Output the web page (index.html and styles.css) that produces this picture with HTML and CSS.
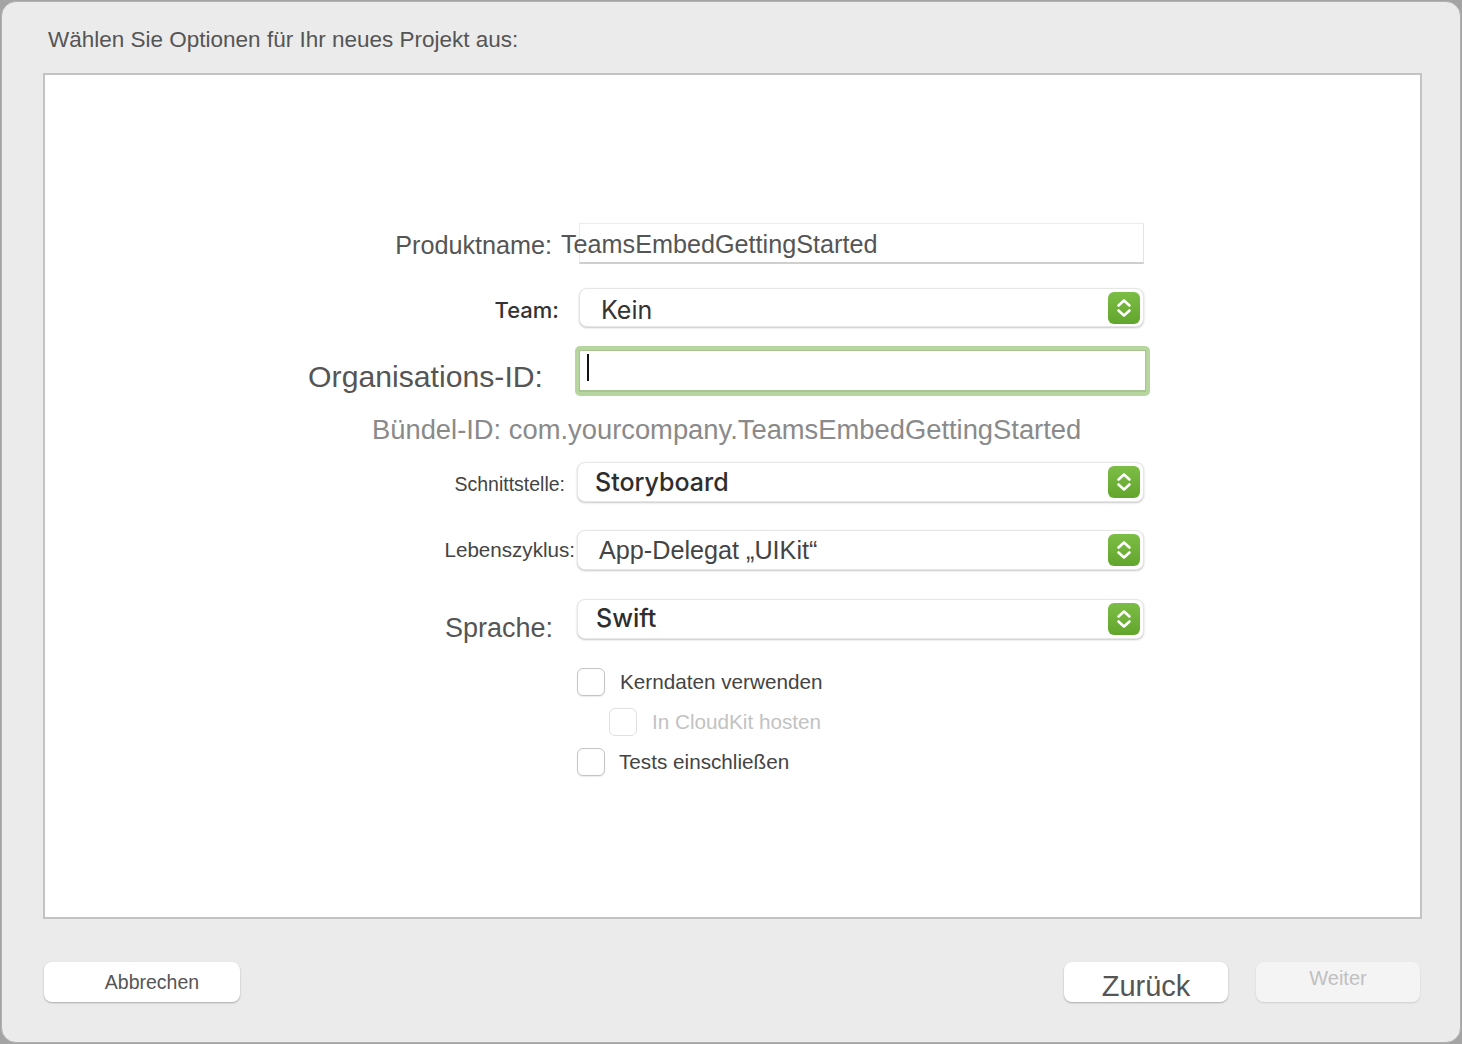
FILE: index.html
```html
<!DOCTYPE html>
<html lang="de">
<head>
<meta charset="utf-8">
<title>Optionen</title>
<link rel="stylesheet" href="styles.css">
</head>
<body>
<div class="window">
  <div class="title">Wählen Sie Optionen für Ihr neues Projekt aus:</div>
  <div class="panel">
    <div class="form">
      <div class="row row-product">
        <div class="label lbl-product">Produktname:</div>
        <div class="textfield"><span class="tf-value">TeamsEmbedGettingStarted</span></div>
      </div>
      <div class="row row-team">
        <div class="label lbl-team">Team:</div>
        <div class="popup"><span class="pv pv-team">Kein</span><span class="stepper"><svg viewBox="0 0 32 32" width="32" height="32"><path d="M10.5 13.5 L16 8.5 L21.5 13.5" fill="none" stroke="#fff" stroke-width="2.6" stroke-linecap="round" stroke-linejoin="round"/><path d="M10.5 18.5 L16 23.5 L21.5 18.5" fill="none" stroke="#fff" stroke-width="2.6" stroke-linecap="round" stroke-linejoin="round"/></svg></span></div>
      </div>
      <div class="row row-org">
        <div class="label lbl-org">Organisations-ID:</div>
        <div class="orgfield"><div class="org-inner"><span class="caret"></span></div></div>
      </div>
      <div class="bundle">Bündel-ID: com.yourcompany.TeamsEmbedGettingStarted</div>
      <div class="row row-ui">
        <div class="label lbl-ui">Schnittstelle:</div>
        <div class="popup popup-wide"><span class="pv pv-ui">Storyboard</span><span class="stepper"><svg viewBox="0 0 32 32" width="32" height="32"><path d="M10.5 13.5 L16 8.5 L21.5 13.5" fill="none" stroke="#fff" stroke-width="2.6" stroke-linecap="round" stroke-linejoin="round"/><path d="M10.5 18.5 L16 23.5 L21.5 18.5" fill="none" stroke="#fff" stroke-width="2.6" stroke-linecap="round" stroke-linejoin="round"/></svg></span></div>
      </div>
      <div class="row row-life">
        <div class="label lbl-life">Lebenszyklus:</div>
        <div class="popup popup-wide"><span class="pv pv-life">App-Delegat „UIKit“</span><span class="stepper"><svg viewBox="0 0 32 32" width="32" height="32"><path d="M10.5 13.5 L16 8.5 L21.5 13.5" fill="none" stroke="#fff" stroke-width="2.6" stroke-linecap="round" stroke-linejoin="round"/><path d="M10.5 18.5 L16 23.5 L21.5 18.5" fill="none" stroke="#fff" stroke-width="2.6" stroke-linecap="round" stroke-linejoin="round"/></svg></span></div>
      </div>
      <div class="row row-lang">
        <div class="label lbl-lang">Sprache:</div>
        <div class="popup popup-wide"><span class="pv pv-lang">Swift</span><span class="stepper"><svg viewBox="0 0 32 32" width="32" height="32"><path d="M10.5 13.5 L16 8.5 L21.5 13.5" fill="none" stroke="#fff" stroke-width="2.6" stroke-linecap="round" stroke-linejoin="round"/><path d="M10.5 18.5 L16 23.5 L21.5 18.5" fill="none" stroke="#fff" stroke-width="2.6" stroke-linecap="round" stroke-linejoin="round"/></svg></span></div>
      </div>
      <div class="checks">
        <div class="check"><span class="box"></span><span class="ctext">Kerndaten verwenden</span></div>
        <div class="check check-sub disabled"><span class="box"></span><span class="ctext">In CloudKit hosten</span></div>
        <div class="check"><span class="box"></span><span class="ctext ctext-tests">Tests einschließen</span></div>
      </div>
    </div>
  </div>
  <div class="buttons">
    <div class="btn btn-cancel">Abbrechen</div>
    <div class="spacer"></div>
    <div class="btn btn-back">Zurück</div>
    <div class="btn btn-next">Weiter</div>
  </div>
</div>
</body>
</html>
```

FILE: styles.css
```css
html, body {
  margin: 0;
  padding: 0;
}
body {
  background: #a4a4a4;
  width: 1462px;
  height: 1044px;
  overflow: hidden;
  font-family: "Liberation Sans", Arial, sans-serif;
  color: #555;
}
.window {
  box-sizing: border-box;
  width: 1460px;
  height: 1042px;
  margin: 1px 0 0 1px;
  background: #ebebeb;
  border: 1px solid #b0b0b0;
  border-radius: 15px;
  padding: 0 0 0 41px;
  display: flex;
  flex-direction: column;
}
.title {
  font-size: 22.5px;
  color: #555;
  height: 71px;
  padding: 26px 0 0 5px;
  box-sizing: border-box;
  line-height: 24px;
}
.panel {
  box-sizing: border-box;
  width: 1379px;
  height: 846px;
  background: #fff;
  border: 2px solid #c3c3c3;
}
.form {
  display: flex;
  flex-direction: column;
  padding-top: 148px;
}
.row {
  display: flex;
  align-items: center;
}
.label {
  box-sizing: border-box;
  width: 534px;
  text-align: right;
  white-space: nowrap;
  color: #555;
}
.lbl-product {
  font-size: 25.2px;
  padding-right: 27px;
  padding-top: 3px;
}
.textfield {
  box-sizing: border-box;
  width: 565px;
  height: 41px;
  border-top: 1px solid #ececec;
  border-left: 1px solid #ececec;
  border-right: 1px solid #e4e4e4;
  border-bottom: 2px solid #cfcfcf;
  display: flex;
  align-items: center;
  overflow: visible;
}
.tf-value {
  font-size: 25.2px;
  margin-left: -19px;
  padding-top: 3px;
  white-space: nowrap;
  color: #555;
}
.row-team {
  margin-top: 24px;
}
.lbl-team {
  font-family: Inter, "Liberation Sans", sans-serif;
  font-weight: 500;
  font-size: 22px;
  color: #333;
  padding-right: 20px;
  padding-top: 4px;
}
.popup {
  box-sizing: border-box;
  width: 565px;
  height: 39px;
  background: #fff;
  border: 1px solid #e6e6e6;
  border-radius: 8px;
  box-shadow: 0 1px 2px rgba(0,0,0,0.22);
  display: flex;
  align-items: center;
  justify-content: space-between;
  padding: 0 3px 0 0;
}
.popup-wide {
  width: 567px;
  height: 40px;
}
.pv {
  font-family: Inter, "Liberation Sans", sans-serif;
  color: #333;
  white-space: nowrap;
}
.pv-team {
  font-size: 25px;
  font-weight: 400;
  padding-left: 21px;
  padding-top: 4px;
}
.pv-ui {
  font-size: 25px;
  font-weight: 500;
  padding-left: 17px;
  color: #2e2e2e;
}
.pv-life {
  font-family: "Liberation Sans", Arial, sans-serif;
  font-size: 25.2px;
  padding-left: 21px;
  color: #444;
}
.pv-lang {
  font-size: 25px;
  font-weight: 500;
  padding-left: 18px;
  color: #2e2e2e;
  padding-bottom: 2px;
}
.stepper {
  width: 32px;
  height: 32px;
  border-radius: 6px;
  background: linear-gradient(#7cbd45, #62a52d);
  display: flex;
}
.row-org {
  margin-top: 19px;
}
.lbl-org {
  font-size: 30.2px;
  padding-right: 36px;
  padding-top: 11px;
}
.orgfield {
  box-sizing: border-box;
  width: 575px;
  height: 50px;
  margin-left: -4px;
  border: 4px solid #b7d59f;
  border-radius: 5px;
  background: #fff;
}
.org-inner {
  box-sizing: border-box;
  height: 100%;
  border: 1px solid #a9c493;
  border-bottom: 2px solid #a9c493;
  display: flex;
  align-items: center;
  padding-left: 7px;
}
.caret {
  width: 2px;
  height: 27px;
  background: #111;
  margin-top: -6px;
}
.bundle {
  font-size: 27.35px;
  color: #8a8a8a;
  margin-left: 327px;
  margin-top: 16px;
  height: 35px;
  line-height: 35px;
  white-space: nowrap;
}
.row-ui {
  margin-top: 15px;
}
.lbl-ui {
  font-size: 19.5px;
  width: 520px;
  padding-top: 4px;
  margin-right: 12px;
  color: #444;
}
.row-life {
  margin-top: 28px;
}
.lbl-life {
  font-size: 20.6px;
  width: 530px;
  margin-right: 2px;
  color: #444;
}
.row-lang {
  margin-top: 29px;
}
.lbl-lang {
  font-size: 27px;
  width: 508px;
  margin-right: 24px;
  height: 40px;
  line-height: 58px;
  color: #555;
}
.checks {
  display: flex;
  flex-direction: column;
  margin-top: 29px;
  padding-left: 532px;
}
.check {
  display: flex;
  align-items: center;
  height: 27px;
}
.check + .check {
  margin-top: 13px;
}
.box {
  box-sizing: border-box;
  width: 28px;
  height: 28px;
  border: 1px solid #c4c4c4;
  border-radius: 6px;
  background: #fff;
  box-shadow: 0 1px 1px rgba(0,0,0,0.08);
}
.ctext {
  font-size: 20.7px;
  color: #444;
  margin-left: 15px;
  white-space: nowrap;
}
.check-sub {
  padding-left: 32px;
}
.disabled .box {
  border-color: #e0e0e0;
  box-shadow: none;
}
.disabled .ctext {
  color: #c2c2c2;
}
.ctext-tests {
  margin-left: 14px;
}
.buttons {
  display: flex;
  align-items: center;
  margin-top: 43px;
  width: 1377px;
}
.spacer {
  flex: 1;
}
.btn {
  box-sizing: border-box;
  height: 40px;
  border-radius: 8px;
  background: #fff;
  box-shadow: 0 1px 2px rgba(0,0,0,0.28);
  display: flex;
  align-items: center;
  justify-content: center;
  color: #555;
  white-space: nowrap;
}
.btn-cancel {
  width: 196px;
  font-size: 19.5px;
  margin-left: 1px;
  padding-left: 20px;
}
.btn-back {
  width: 164px;
  font-size: 29px;
  padding-top: 8px;
}
.btn-next {
  width: 164px;
  font-size: 20px;
  margin-left: 28px;
  background: #f4f4f4;
  color: #c0c0c0;
  box-shadow: 0 1px 2px rgba(0,0,0,0.12);
  padding-bottom: 7px;
}
```
